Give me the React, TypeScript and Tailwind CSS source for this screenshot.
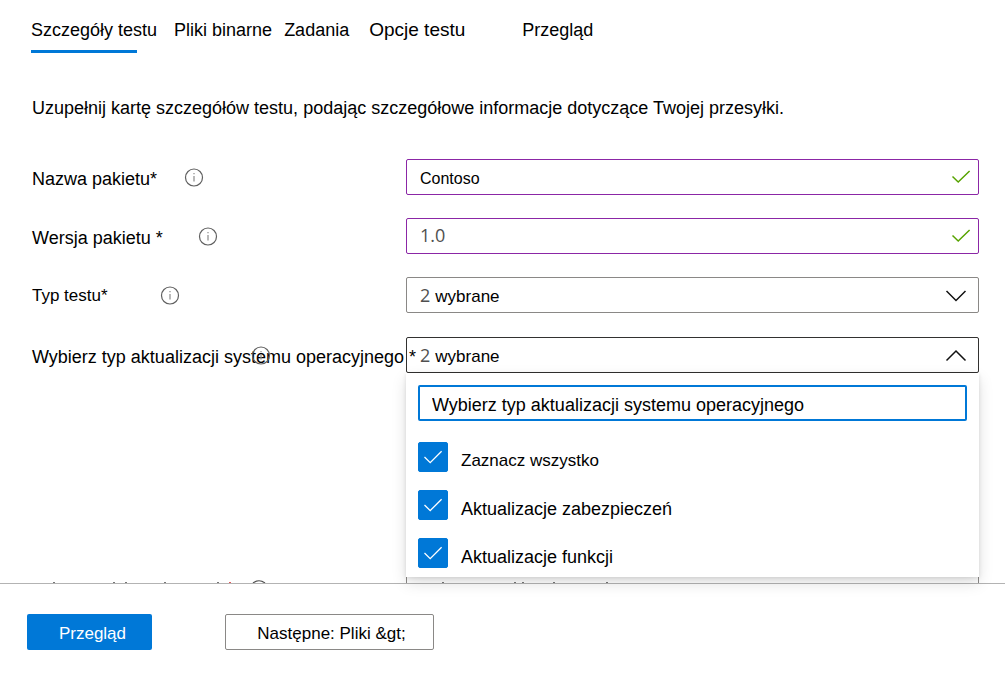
import { useState, type ReactNode } from "react";

function InfoIcon() {
  return (
    <svg width="20" height="20" viewBox="0 0 20 20" fill="none" aria-hidden="true">
      <circle cx="10" cy="10.5" r="8.5" stroke="#606060" strokeWidth="1.2" />
      <path d="M10 9v5.500" stroke="#8a8a8a" strokeWidth="1.2" />
      <path d="M10 6v1.300" stroke="#8a8a8a" strokeWidth="1.2" />
    </svg>
  );
}

function ValidMark() {
  return (
    <svg
      className="pointer-events-none absolute top-2 right-2"
      width="20"
      height="20"
      viewBox="0 0 20 20"
      fill="none"
      aria-hidden="true"
    >
      <path d="M1.500 9.500 7.200 15 18.600 4" stroke="#57a300" strokeWidth="1.500" />
    </svg>
  );
}

function Chevron({ up = false }: { up?: boolean }) {
  return (
    <svg width="22" height="14" viewBox="0 0 22 14" fill="none" aria-hidden="true">
      <path d={up ? "M1.5 12.500 11 3 20.5 12.500" : "M1.5 3 11 12.500 20.5 3"} stroke="#111" strokeWidth="1.5" />
    </svg>
  );
}

function Row({ label, children }: { label: ReactNode; children: ReactNode }) {
  return (
    <div className="grid grid-cols-[374px_minmax(0,1fr)] items-center">
      {label}
      {children}
    </div>
  );
}

function SelectedCount() {
  return (
    <span className="flex items-baseline gap-[5px] pt-[2px] text-[17px]">
      <span className="font-['Open_Sans',sans-serif] text-[18px] text-[#505050]">2</span>wybrane
    </span>
  );
}

function Option({ label, size }: { label: string; size: string }) {
  const [checked, setChecked] = useState(true);
  return (
    <label className={`flex h-[30px] items-center gap-[13px] ${size}`}>
      <span className="relative h-[30px] w-[30px]">
        <input
          type="checkbox"
          checked={checked}
          onChange={(e) => setChecked(e.target.checked)}
          className="block h-[30px] w-[30px] appearance-none rounded-[2px] border border-[#0078d7] checked:bg-[#0078d7]"
        />
        <svg
          className="pointer-events-none absolute inset-0"
          width="30"
          height="30"
          viewBox="0 0 30 30"
          fill="none"
          aria-hidden="true"
        >
          <path d="M6.5 15 12.2 20.6 23.6 9.2" stroke="white" strokeWidth="1.3" />
        </svg>
      </span>
      <span className="pt-[7px]">{label}</span>
    </label>
  );
}

export default function App() {
  return (
    <div className="bg-white font-['Liberation_Sans',Arial,sans-serif] text-[18px] leading-6 text-black">
      <nav className="flex items-start pt-[18px] pl-[31px] whitespace-nowrap">
        <a href="#szczegoly" aria-current="page" className="mr-[17px]">
          Szczegóły testu
          <span className="mt-2 block h-[3px] w-[106px] bg-[#0078d7]" />
        </a>
        <a href="#pliki" className="mr-3">Pliki binarne</a>
        <a href="#zadania" className="mr-5">Zadania</a>
        <a href="#opcje" className="mr-[57px] text-[19px]">Opcje testu</a>
        <a href="#przeglad">Przegląd</a>
      </nav>

      <main className="pt-[43px] pr-[26px] pl-8">
        <p>Uzupełnij kartę szczegółów testu, podając szczegółowe informacje dotyczące Twojej przesyłki.</p>

        <form className="flex flex-col pt-[39px]">
          <div className="flex flex-col gap-[23px]">
            <Row
              label={
                <div className="flex items-center gap-[27px]">
                  <label htmlFor="name" className="pt-1">Nazwa pakietu*</label>
                  <InfoIcon />
                </div>
              }
            >
              <div className="relative">
                <input
                  id="name"
                  defaultValue="Contoso"
                  className="block h-9 w-full rounded-[2px] border border-[#8b26a6] px-[13px] pt-[3px] text-[16px] outline-none"
                />
                <ValidMark />
              </div>
            </Row>
            <Row
              label={
                <div className="flex items-center gap-[35px]">
                  <label htmlFor="version" className="pt-1">Wersja pakietu *</label>
                  <InfoIcon />
                </div>
              }
            >
              <div className="relative">
                <input
                  id="version"
                  defaultValue="1.0"
                  className="block h-9 w-full rounded-[2px] border border-[#8b26a6] px-[13px] pb-[2px] font-['Open_Sans',sans-serif] text-[18px] text-[#505050] outline-none"
                />
                <ValidMark />
              </div>
            </Row>
            <Row
              label={
                <div className="flex items-center gap-[52px]">
                  <span id="type-label" className="pt-[2px] text-[17px]">Typ testu*</span>
                  <InfoIcon />
                </div>
              }
            >
              <button
                type="button"
                aria-labelledby="type-label"
                className="flex h-9 w-full items-center justify-between rounded-[2px] border border-[#8a8886] pr-[11px] pl-[13px]"
              >
                <SelectedCount />
                <Chevron />
              </button>
            </Row>
          </div>

          <div className="pt-6">
            <Row
              label={
                <div className="relative z-10 pt-1 whitespace-nowrap">
                  <span id="update-label">Wybierz typ aktualizacji systemu operacyjnego *</span>
                  <span className="absolute top-1 left-[219px]">
                    <InfoIcon />
                  </span>
                </div>
              }
            >
              <div className="relative">
                <button
                  type="button"
                  aria-labelledby="update-label"
                  aria-expanded="true"
                  className="flex h-9 w-full items-center justify-between rounded-[2px] border border-[#323130] pr-[11px] pl-[13px]"
                >
                  <SelectedCount />
                  <Chevron up />
                </button>
                <div className="absolute top-full left-0 z-20 w-full bg-white px-3 pt-3 pb-[9px] shadow-[0_6px_14px_rgba(0,0,0,0.13),0_1px_4px_rgba(0,0,0,0.11)]">
                  <input
                    aria-label="Wybierz typ aktualizacji systemu operacyjnego"
                    defaultValue="Wybierz typ aktualizacji systemu operacyjnego"
                    className="block h-9 w-full rounded-[2px] border-2 border-[#0078d7] px-3 pt-1 outline-none"
                  />
                  <div className="flex flex-col gap-[18px] pt-[21px]">
                    <Option label="Zaznacz wszystko" size="text-[17px]" />
                    <Option label="Aktualizacje zabezpieczeń" size="text-[18px]" />
                    <Option label="Aktualizacje funkcji" size="text-[18px]" />
                  </div>
                </div>
              </div>
            </Row>
          </div>

          <div className="mt-[202px] h-2 overflow-hidden">
            <div className="grid grid-cols-[374px_minmax(0,1fr)]" aria-hidden="true">
              <svg width="300" height="8" viewBox="0 0 300 8" fill="none">
                <path d="M21 7.5h2M81 7.5h2M93 7.5h2M132 7.5h2M185 7.5h2" stroke="#777" />
                <path d="M197 7.5h2" stroke="#e0595b" />
                <path d="M221 8q6-4.500 12 0" stroke="#505050" strokeWidth="1.2" />
              </svg>
              <div className="h-2 border-x border-[#8a8886]">
                <svg width="240" height="8" viewBox="0 0 240 8" fill="none">
                  <path d="M35 7.500h2M107 7.500h2M115 7.500h2M146 7.500h2M199 7.500h2" stroke="#777" />
                </svg>
              </div>
            </div>
          </div>
        </form>
      </main>

      <footer className="flex gap-[73px] border-t border-[#b3b3b3] px-[27px] pt-[30px] pb-[27px] text-[17px]">
        <button type="button" className="h-9 w-[125px] rounded-[2px] bg-[#0078d7] pt-1 pl-[6px] text-white">
          Przegląd
        </button>
        <button type="button" className="h-9 w-[209px] rounded-[2px] border border-[#8a8886] pt-1 pl-1">
          Następne: Pliki &amp;gt;
        </button>
      </footer>
    </div>
  );
}
